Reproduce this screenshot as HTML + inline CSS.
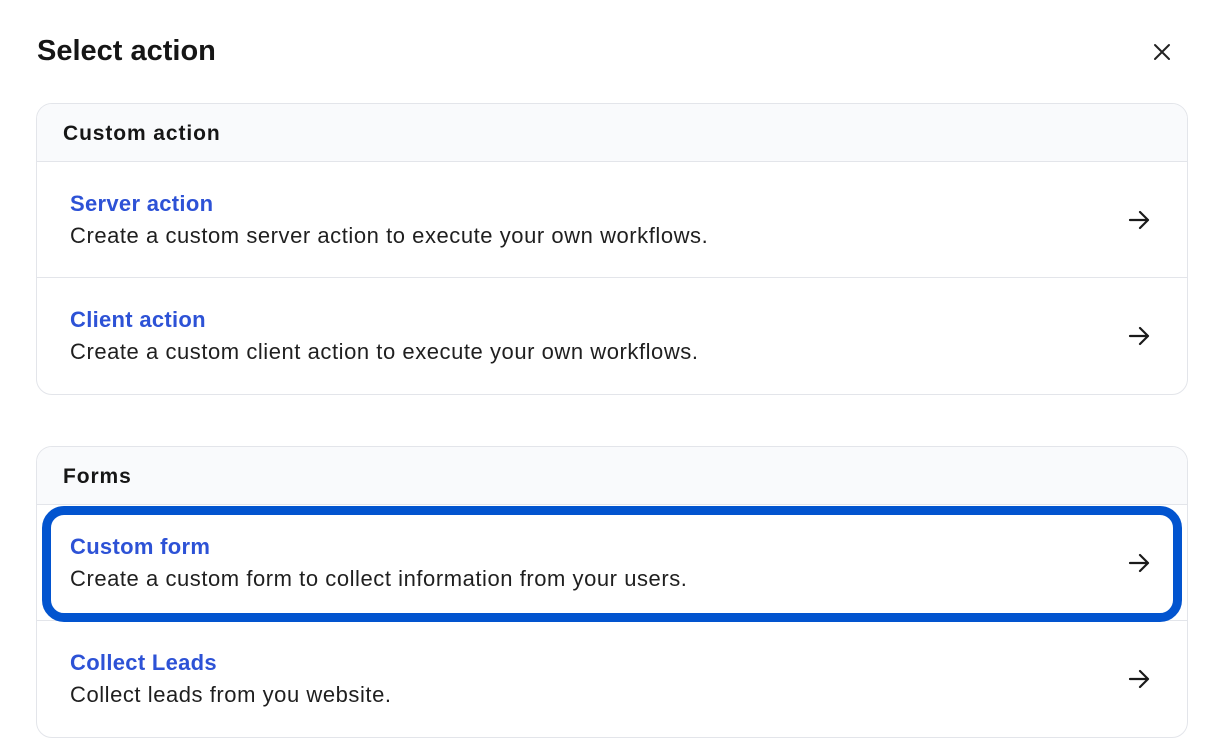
<!DOCTYPE html>
<html><head><style>
*{box-sizing:border-box;margin:0;padding:0}
body{width:1222px;height:744px;background:#fff;font-family:"Liberation Sans",sans-serif;color:#1a1a1a;position:relative;overflow:hidden}
h1{position:absolute;left:37px;top:35px;font-size:29px;font-weight:bold;color:#161616}
.x{position:absolute;left:1152px;top:42px}
.card{position:absolute;left:36px;width:1152px;border:1px solid #e3e5ea;border-radius:16px;overflow:hidden}
.hd{height:58px;background:#f9fafc;border-bottom:1px solid #e3e5ea;padding-left:26px;font-size:21px;letter-spacing:0.9px;font-weight:bold;line-height:60px;color:#161616}
.row{height:116px;position:relative;padding-left:33px;padding-top:29px;border-bottom:1px solid #e3e5ea}
.row:last-child{border-bottom:none}
.t{font-size:22px;letter-spacing:0.3px;font-weight:bold;color:#2d52d6;line-height:26px}
.d{font-size:22px;letter-spacing:0.55px;color:#1f1f1f;line-height:30px;margin-top:4px}
.ar{position:absolute;left:1091px;top:48px}
.hl{position:absolute;left:42px;top:506px;width:1140px;height:116px;border:9px solid #0254cf;border-radius:22px}
</style></head><body>
<h1>Select action</h1>
<svg class="x" width="20" height="20" viewBox="0 0 20 20"><path d="M3 3L17 17M17 3L3 17" stroke="#222" stroke-width="2" stroke-linecap="round"/></svg>
<div class="card" style="top:103px">
<div class="hd">Custom action</div>
<div class="row"><div class="t">Server action</div><div class="d">Create a custom server action to execute your own workflows.</div><svg class="ar" width="22" height="20" viewBox="0 0 22 20"><path d="M2 10H20M12 2L20 10L12 18" stroke="#1a1a1a" stroke-width="2.2" fill="none" stroke-linecap="round" stroke-linejoin="round"/></svg></div>
<div class="row"><div class="t">Client action</div><div class="d">Create a custom client action to execute your own workflows.</div><svg class="ar" width="22" height="20" viewBox="0 0 22 20"><path d="M2 10H20M12 2L20 10L12 18" stroke="#1a1a1a" stroke-width="2.2" fill="none" stroke-linecap="round" stroke-linejoin="round"/></svg></div>
</div>
<div class="card" style="top:446px;height:292px">
<div class="hd">Forms</div>
<div class="row"><div class="t">Custom form</div><div class="d">Create a custom form to collect information from your users.</div><svg class="ar" width="22" height="20" viewBox="0 0 22 20"><path d="M2 10H20M12 2L20 10L12 18" stroke="#1a1a1a" stroke-width="2.2" fill="none" stroke-linecap="round" stroke-linejoin="round"/></svg></div>
<div class="row"><div class="t">Collect Leads</div><div class="d">Collect leads from you website.</div><svg class="ar" width="22" height="20" viewBox="0 0 22 20"><path d="M2 10H20M12 2L20 10L12 18" stroke="#1a1a1a" stroke-width="2.2" fill="none" stroke-linecap="round" stroke-linejoin="round"/></svg></div>
</div>
<div class="hl"></div>
</body></html>
